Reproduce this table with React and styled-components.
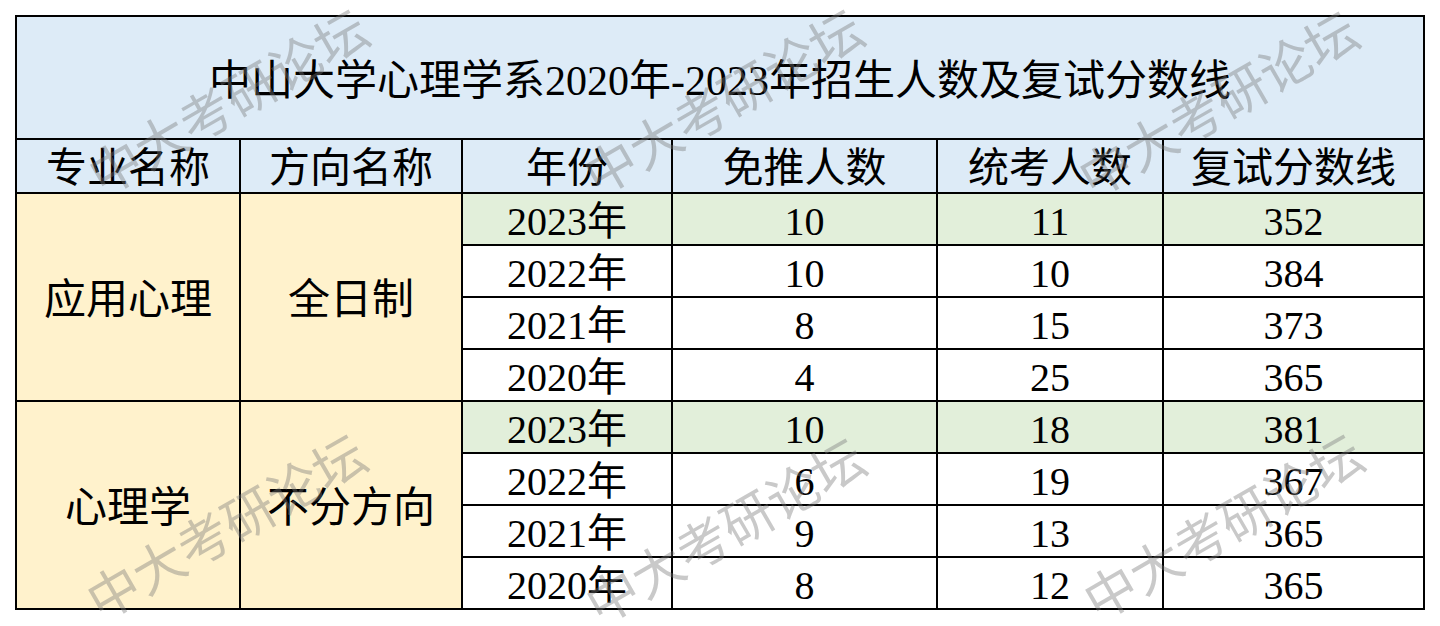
import styled, { createGlobalStyle } from "styled-components";

const GlobalStyle = createGlobalStyle`
  html, body {
    margin: 0;
    padding: 0;
    background: #ffffff;
  }
  body {
    font-family: "Liberation Serif", "DejaVu Serif", "Noto Sans CJK SC", serif;
    color: #000;
  }
`;

const Page = styled.div`
  position: relative;
  width: 1440px;
  height: 626px;
  padding: 15px;
  box-sizing: border-box;
  overflow: hidden;
`;

const Table = styled.div`
  display: grid;
  width: 1410px;
  box-sizing: border-box;
  grid-template-columns: 222px 220px 208px 263px 224px 259px;
  grid-template-rows: 121px 52px repeat(8, 50px);
  gap: 2px;
  padding: 2px;
  background: #000;
  font-family: "Liberation Serif", "DejaVu Serif", "Noto Sans CJK SC", serif;
`;

const Cell = styled.div`
  display: flex;
  align-items: center;
  justify-content: center;
  box-sizing: border-box;
  padding-top: 5px;
  background: ${(p) => p.$bg || "#ffffff"};
  font-family: "Liberation Serif", "Noto Sans CJK SC", serif;
  font-size: ${(p) => p.$size || 40}px;
  line-height: 1;
  white-space: nowrap;
  grid-column: ${(p) => p.$col || "auto"};
  grid-row: ${(p) => p.$row || "auto"};
`;

const Title = styled(Cell)`
  grid-column: 1 / -1;
  background: #ddebf7;
  font-size: 42px;
  padding-top: 6px;
`;

const Head = styled(Cell)`
  background: #ddebf7;
  font-size: 41px;
  padding-top: 4px;
`;

const Group = styled(Cell)`
  background: #fff2cc;
  font-size: 42px;
`;

const Watermark = styled.span`
  position: absolute;
  transform: translate(-50%, -50%) rotate(-30deg);
  font-family: "Noto Sans CJK SC", sans-serif;
  font-size: 52px;
  line-height: 1;
  white-space: nowrap;
  color: rgba(120, 120, 120, 0.4);
  pointer-events: none;
`;

const headers = ["专业名称", "方向名称", "年份", "免推人数", "统考人数", "复试分数线"];

const groups = [
  {
    major: "应用心理",
    dir: "全日制",
    rows: [
      ["2023年", "10", "11", "352"],
      ["2022年", "10", "10", "384"],
      ["2021年", "8", "15", "373"],
      ["2020年", "4", "25", "365"],
    ],
  },
  {
    major: "心理学",
    dir: "不分方向",
    rows: [
      ["2023年", "10", "18", "381"],
      ["2022年", "6", "19", "367"],
      ["2021年", "9", "13", "365"],
      ["2020年", "8", "12", "365"],
    ],
  },
];

const marks = [
  [227, 100],
  [722, 100],
  [1217, 102],
  [225, 525],
  [724, 529],
  [1222, 525],
];

export default function App() {
  return (
    <Page>
      <GlobalStyle />
      <Table>
        <Title>中山大学心理学系2020年-2023年招生人数及复试分数线</Title>
        {headers.map((h) => (
          <Head key={h}>{h}</Head>
        ))}
        {groups.map((g, gi) => {
          const start = 3 + gi * 4;
          return [
            <Group key={g.major + "m"} $col="1" $row={`${start} / span 4`}>
              {g.major}
            </Group>,
            <Group key={g.major + "d"} $col="2" $row={`${start} / span 4`}>
              {g.dir}
            </Group>,
            ...g.rows.map((r, ri) =>
              r.map((v, ci) => (
                <Cell
                  key={`${gi}-${ri}-${ci}`}
                  $col={String(3 + ci)}
                  $row={String(start + ri)}
                  $bg={ri === 0 ? "#e2efda" : "#ffffff"}
                >
                  {v}
                </Cell>
              ))
            ),
          ];
        })}
      </Table>
      {marks.map(([x, y], i) => (
        <Watermark key={i} style={{ left: x, top: y }}>
          中大考研论坛
        </Watermark>
      ))}
    </Page>
  );
}
